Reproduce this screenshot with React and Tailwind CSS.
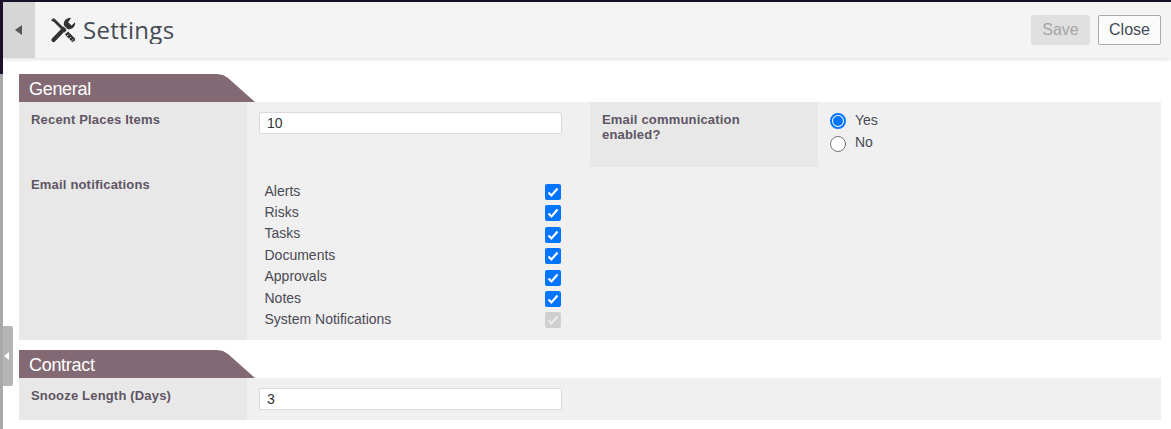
import React from 'react';

const SectionTab = ({ title }) => (
  <div className="w-[236px] h-[28px] bg-[#826973] text-white text-[18px] leading-[30px] pl-[10px] tracking-[-0.3px] [clip-path:polygon(0_0,198px_0,204px_1px,209px_4px,236px_100%,0_100%)]">
    {title}
  </div>
);

const Label = ({ children, className = '' }) => (
  <div className={`w-[228px] shrink-0 bg-[#e8e8e8] pl-3 pr-10 pt-[10px] text-[13px] leading-[15px] font-bold tracking-[0.18px] text-[#5f5564] ${className}`}>
    {children}
  </div>
);

const TextBox = ({ value }) => (
  <input
    readOnly
    value={value}
    className="w-[303px] h-[22px] bg-white border border-[#d9d9d9] rounded-[2px] px-[7px] text-[14px] text-[#333] outline-none"
  />
);

const Check = ({ disabled }) => (
  <span className={`w-4 h-4 rounded-[2px] flex items-center justify-center ${disabled ? 'bg-[#cfcfcf]' : 'bg-[#0075ff]'}`}>
    <svg width="12" height="12" viewBox="0 0 12 12" fill="none">
      <path d="M1.5 6.5 L4.5 9.5 L10.5 2.5" stroke={disabled ? '#ececec' : '#fff'} strokeWidth="2.2" />
    </svg>
  </span>
);

const Radio = ({ checked }) => (
  <span className={`w-4 h-4 rounded-full bg-white flex items-center justify-center border ${checked ? 'border-[#0075ff] border-2' : 'border-[#767676]'}`}>
    {checked && <span className="w-[10px] h-[10px] rounded-full bg-[#0075ff]" />}
  </span>
);

const notifications = ['Alerts', 'Risks', 'Tasks', 'Documents', 'Approvals', 'Notes', 'System Notifications'];

export default function App() {
  return (
    <div className="relative flex w-full h-[429px] overflow-hidden bg-white font-['Liberation_Sans',Arial,sans-serif] text-[#4a4a55]">
      {/* left edge strip */}
      <div className="w-[3px] shrink-0 flex flex-col">
        <div className="h-[74px] bg-[#21102a]" />
        <div className="flex-1 bg-[#a9a9a9]" />
      </div>

      <div className="flex-1 flex flex-col min-w-0">
        <div className="h-[2px] bg-[#1a1028]" />

        {/* header */}
        <header className="h-[56px] flex items-center bg-[#f4f4f4] shadow-[0_1px_4px_rgba(0,0,0,0.15)]">
          <div className="w-[32px] h-full bg-[#d6d6d6] flex items-center justify-center">
            <span className="-ml-[2px] w-0 h-0 border-y-[5px] border-y-transparent border-r-[7px] border-r-[#555]" />
          </div>
          <svg className="ml-[15px]" width="26" height="26" viewBox="0 0 26 26" fill="none">
            {/* screwdriver */}
            <path d="M1 3.5 L3.5 1 L6 3 L16.5 13.5 L14.5 15.5 L4 5 Z" fill="#333" />
            <path d="M15 17.5 L18 14.5 L25 21.5 Q25.5 24.5 22 25 Z" fill="#333" />
            <path d="M18.4 17.8 L16.8 19.4 M20.8 20.2 L19.2 21.8 M23 22.4 L21.6 23.8" stroke="#f4f4f4" strokeWidth="1" />
            {/* wrench */}
            <path d="M1.5 22 L13.5 9.5 L16.5 12.5 L4.5 25 Q2.5 25.5 1.5 24 Z" fill="#333" />
            <path d="M21 1 A6 6 0 0 0 14 8.5 L17.5 12 A6 6 0 0 0 25 5.2 L21.6 8.4 L18.2 5.2 Z" fill="#333" />
          </svg>
          <h1 className="ml-[7px] h-[28px] overflow-hidden font-['Open_Sans',sans-serif] text-[24px] leading-[28px] tracking-[0.3px] text-[#444b55]">Settings</h1>
          <div className="ml-auto flex items-center gap-2 pr-[10px]">
            <button className="w-[59px] h-[30px] rounded-[2px] bg-[#e0e0e0] text-[16px] text-[#a5a5a5]">Save</button>
            <button className="w-[63px] h-[30px] rounded-[2px] bg-[#fbfbfb] border border-[#aaa] text-[16px] text-[#444b55]">Close</button>
          </div>
        </header>

        <main className="pl-[16px] pr-[10px] pt-[16px]">
          <SectionTab title="General" />
          <div className="bg-[#f0f0f0] h-[238px] flex">
            <div className="flex flex-col">
              <Label className="h-[65px]">Recent Places Items</Label>
              <Label className="flex-1">Email notifications</Label>
            </div>
            <div className="flex-1 flex flex-col">
              <div className="flex h-[65px]">
                <div className="w-[343px] pl-3 pt-[9px]">
                  <TextBox value="10" />
                </div>
                <Label>Email communication enabled?</Label>
                <div className="pl-3 pt-[7px] text-[14px] flex flex-col">
                  <label className="h-[23px] flex items-center gap-[9px]"><Radio checked />Yes</label>
                  <label className="h-[23px] flex items-center gap-[9px]"><Radio /><span className="-mt-[2px]">No</span></label>
                </div>
              </div>
              <div className="pl-[17.5px] pt-[14.3px] w-[314px] text-[14px]">
                {notifications.map((name) => (
                  <div key={name} className="h-[21.4px] flex items-center justify-between">
                    <span className="-mt-[1.6px]">{name}</span>
                    <Check disabled={name === 'System Notifications'} />
                  </div>
                ))}
              </div>
            </div>
          </div>

          <div className="mt-[10px]">
            <SectionTab title="Contract" />
            <div className="bg-[#f0f0f0] h-[42px] flex">
              <Label>Snooze Length (Days)</Label>
              <div className="pl-3 pt-[9px]">
                <TextBox value="3" />
              </div>
            </div>
          </div>
        </main>
      </div>

      {/* collapse handle */}
      <div className="absolute left-[3px] top-[326px] w-[10px] h-[60px] bg-[#b5b5b5] rounded-r-[2px] flex items-center justify-center">
        <span className="-ml-[3px] w-0 h-0 border-y-[4px] border-y-transparent border-r-[5px] border-r-white" />
      </div>
    </div>
  );
}
